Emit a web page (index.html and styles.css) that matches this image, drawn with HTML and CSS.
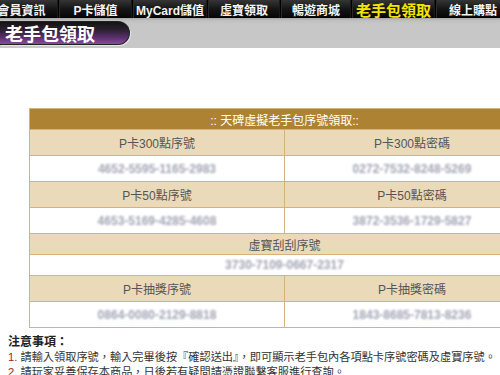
FILE: index.html
```html
<!DOCTYPE html>
<html lang="zh-Hant">
<head>
<meta charset="utf-8">
<title>老手包領取</title>
<link rel="stylesheet" href="styles.css">
</head>
<body>
<nav class="topnav">
  <a class="nav-item w1">會員資訊</a>
  <a class="nav-item w2">P卡儲值</a>
  <a class="nav-item w3">MyCard儲值</a>
  <a class="nav-item w4">虛寶領取</a>
  <a class="nav-item w5">暢遊商城</a>
  <a class="nav-item w6 active">老手包領取</a>
  <a class="nav-item w7">線上購點</a>
</nav>
<div class="titlebar">
  <div class="title-tab">老手包領取</div>
</div>
<main class="content">
  <table class="codes">
    <tr class="head"><th colspan="2">:: 天碑虛擬老手包序號領取::</th></tr>
    <tr class="label"><td>P卡300點序號</td><td>P卡300點密碼</td></tr>
    <tr class="value"><td><span class="blur">4652-5595-1165-2983</span></td><td><span class="blur">0272-7532-8248-5269</span></td></tr>
    <tr class="label"><td>P卡50點序號</td><td>P卡50點密碼</td></tr>
    <tr class="value"><td><span class="blur">4653-5169-4285-4608</span></td><td><span class="blur">3872-3536-1729-5827</span></td></tr>
    <tr class="label short"><td colspan="2">虛寶刮刮序號</td></tr>
    <tr class="value short"><td colspan="2"><span class="blur">3730-7109-0667-2317</span></td></tr>
    <tr class="label"><td>P卡抽獎序號</td><td>P卡抽獎密碼</td></tr>
    <tr class="value"><td><span class="blur">0864-0080-2129-8818</span></td><td><span class="blur">1843-8685-7813-8236</span></td></tr>
  </table>
  <section class="notes">
    <h3 class="notes-title">注意事項：</h3>
    <ol class="notes-list">
      <li><span class="num">1.</span> 請輸入領取序號，輸入完畢後按『確認送出』，即可顯示老手包內各項點卡序號密碼及虛寶序號。</li>
      <li><span class="num">2.</span> 請玩家妥善保存本商品，日後若有疑問請憑證聯繫客服進行查詢。</li>
    </ol>
  </section>
</main>
</body>
</html>
```
FILE: styles.css
```css
html, body {
  margin: 0;
  padding: 0;
  overflow: hidden;
  background: #fff;
}
body {
  font-family: "Liberation Sans", "Noto Sans CJK TC", sans-serif;
  font-size: 12px;
  color: #333;
  width: 500px;
}
.topnav {
  display: flex;
  height: 18px;
  background: #000;
  margin-left: -16px;
  white-space: nowrap;
}
.nav-item {
  flex: none;
  display: flex;
  align-items: center;
  justify-content: center;
  height: 18px;
  box-sizing: border-box;
  color: #f4f4f4;
  font-weight: bold;
  font-size: 12px;
  background: linear-gradient(#353535, #151515 50%, #050505);
  border-left: 1px solid #000;
  box-shadow: inset 1px 0 0 #2a2a2a, inset -1px 0 0 #1a1a1a;
  text-decoration: none;
}
.w1 { width: 74px; }
.w2 { width: 74px; }
.w3 { width: 75px; }
.w4 { width: 73px; }
.w5 { width: 71px; }
.w6 { width: 84px; }
.w7 { width: 75px; }
.nav-item.active {
  color: #f2e600;
  font-size: 15px;
}
.titlebar {
  height: 30px;
  background: linear-gradient(#a5a5a5 0, #bdbdbd 2px, #c6c6c6 5px, #c8c8c8);
  padding-top: 3px;
  box-sizing: border-box;
}
.title-tab {
  width: 130px;
  height: 24px;
  box-sizing: border-box;
  border-radius: 0 12px 12px 0;
  border: 1px solid #222;
  border-left: none;
  background: linear-gradient(#141414 0%, #2a2030 35%, #5a2f6c 70%, #8a4a9e 100%);
  box-shadow: 1px 1px 0 #e6e6e6;
  color: #fff;
  font-family: "Noto Sans CJK TC", sans-serif;
  font-weight: bold;
  font-size: 18px;
  line-height: 22px;
  padding-left: 5px;
}
.content {
  padding-top: 60px;
}
.codes {
  margin-left: 29px;
  width: 511px;
  border-collapse: collapse;
  table-layout: fixed;
  border: 1px solid #d5b27a;
}
.codes td, .codes th {
  border: 1px solid #d5b27a;
  text-align: center;
  vertical-align: middle;
  padding: 0;
  font-weight: normal;
}
.head th {
  background: #ad8233;
  color: #fff;
  height: 20px;
  font-size: 12px;
}
.label td {
  background: #eadab9;
  color: #555;
  height: 25px;
}
.value td {
  background: #fff;
  height: 25px;
}
.label.short td, .value.short td {
  height: 20px;
}
.blur {
  color: #a4a4b6;
  filter: blur(1.1px);
  font-size: 12px;
  font-weight: bold;
}
.notes {
  padding-left: 8px;
  margin-top: 5px;
}
.notes-title {
  margin: 0;
  font-size: 12px;
  line-height: 16px;
  font-weight: bold;
  color: #222;
  font-family: "Noto Sans CJK TC", sans-serif;
}
.notes-list {
  margin: 1px 0 0;
  padding: 0;
  list-style: none;
}
.notes-list li {
  font-size: 11.2px;
  line-height: 15px;
  color: #333;
  white-space: nowrap;
}
.num {
  color: #9b2a22;
}
```
